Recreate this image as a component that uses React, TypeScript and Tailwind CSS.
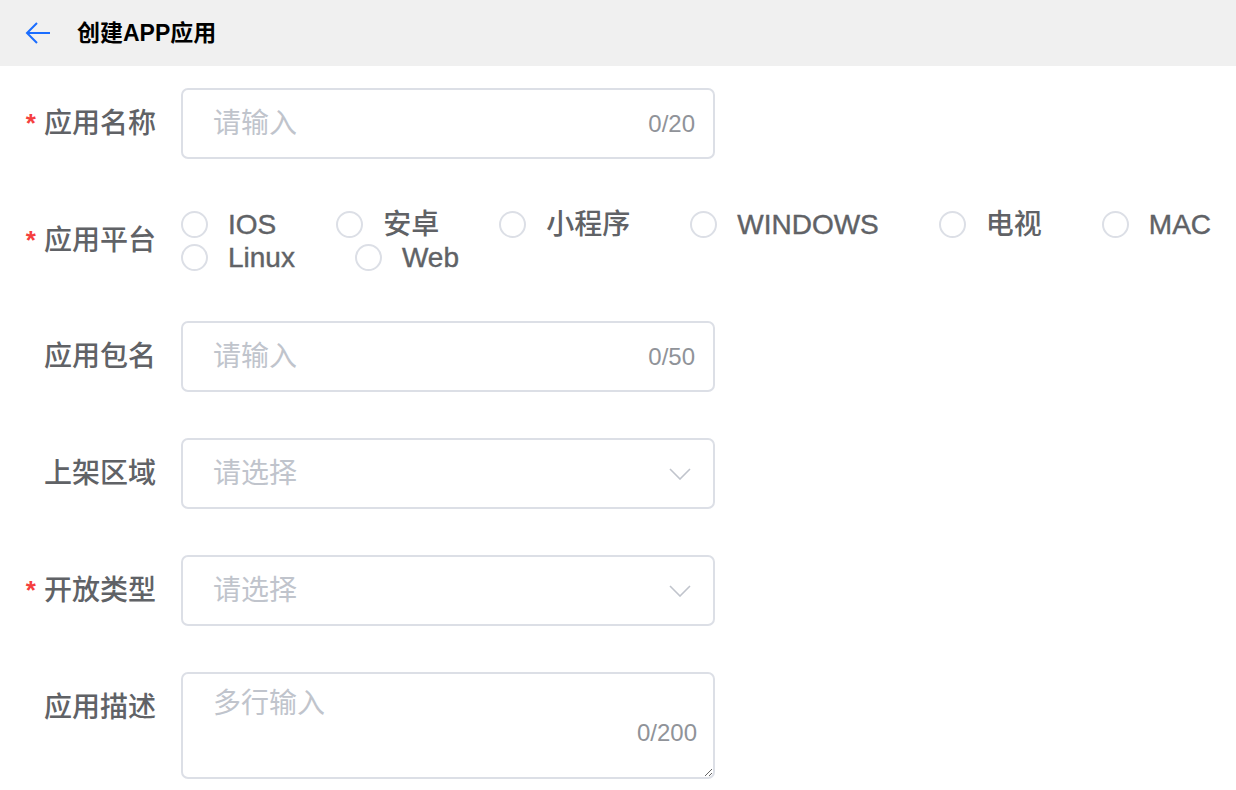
const font = "font-['Liberation_Sans','Noto_Sans_CJK_SC',sans-serif]";

type RowProps = {
  label: string;
  required?: boolean;
  top?: boolean;
  children: React.ReactNode;
};

function Star() {
  return <span className="text-[#f53f3f] text-[26px] font-bold mr-[8px] mt-[-2px] leading-none">*</span>;
}

function FormRow({ label, required, top, children }: RowProps) {
  return (
    <div className={`flex ${top ? "items-start" : "items-center"} mb-[46px]`}>
      <div className="w-[181px] shrink-0 flex justify-end items-center pr-[25px] h-[71px]">
        {required ? <Star /> : null}
        <span className="text-[28px] font-medium text-[#606266] leading-none">{label}</span>
      </div>
      {children}
    </div>
  );
}

function TextInput({ max }: { max: number }) {
  return (
    <div className="w-[534px] h-[71px] border-2 border-[#dcdfe6] rounded-[7px] flex items-center pl-[30px] pr-[18px]">
      <span className="flex-1 text-[28px] text-[#c0c4cc]">请输入</span>
      <span className="text-[24px] text-[#909399]">0/{max}</span>
    </div>
  );
}

function SelectInput() {
  return (
    <div className="w-[534px] h-[71px] border-2 border-[#dcdfe6] rounded-[7px] flex items-center pl-[30px] pr-[22px]">
      <span className="flex-1 text-[28px] text-[#c0c4cc]">请选择</span>
      <svg width="22" height="12" viewBox="0 0 22 12" fill="none">
        <path d="M1 1l10 10L21 1" stroke="#c0c4cc" strokeWidth="1.6" />
      </svg>
    </div>
  );
}

function Radio({ label }: { label: string }) {
  // latin labels get a faint stroke so they read as medium weight
  const latin = /^[A-Za-z]+$/.test(label);
  return (
    <label className="flex items-center h-[33px]">
      <span className="w-[27px] h-[27px] rounded-full border-2 border-[#dcdfe6] mr-[20px]" />
      <span
        className={
          latin
            ? "text-[28px] text-[#606266] leading-none [-webkit-text-stroke:0.4px_#606266]"
            : "text-[28px] font-medium text-[#606266] leading-none"
        }
      >
        {label}
      </span>
    </label>
  );
}

const platforms = ["IOS", "安卓", "小程序", "WINDOWS", "电视", "MAC", "Linux", "Web"];

export default function App() {
  return (
    <div className={`${font} w-[1236px] h-[790px] bg-white overflow-hidden`}>
      <div className="h-[66px] bg-[#f0f0f0] flex items-center pl-[24px]">
        <svg width="28" height="24" viewBox="0 0 28 24" fill="none" className="mr-[25px]">
          <path d="M26 12H3M13 2L3 12l10 10" stroke="#1a6dff" strokeWidth="2" />
        </svg>
        <span className="text-[23px] font-bold text-black">创建APP应用</span>
      </div>

      <div className="pt-[22px]">
        <FormRow label="应用名称" required>
          <TextInput max={20} />
        </FormRow>

        <div className="flex items-center mb-[46px] h-[70px]">
          <div className="w-[181px] shrink-0 flex justify-end items-center pr-[25px] pt-[2px]">
            <Star />
            <span className="text-[28px] font-medium text-[#606266] leading-none">应用平台</span>
          </div>
          <div className="flex flex-wrap gap-x-[60px] w-[1055px] pt-[2px]">
            {platforms.map((p) => (
              <Radio key={p} label={p} />
            ))}
          </div>
        </div>

        <FormRow label="应用包名">
          <TextInput max={50} />
        </FormRow>

        <FormRow label="上架区域">
          <SelectInput />
        </FormRow>

        <FormRow label="开放类型" required>
          <SelectInput />
        </FormRow>

        <FormRow label="应用描述" top>
          <div className="relative w-[534px] h-[107px]">
            <textarea
              placeholder="多行输入"
              className="w-full h-full border-2 border-[#dcdfe6] rounded-[7px] pl-[30px] pt-[12px] text-[28px] leading-[36px] text-[#606266] placeholder:text-[#c0c4cc] outline-none"
            />
            <span className="absolute right-[18px] top-[43px] text-[24px] text-[#909399]">0/200</span>
          </div>
        </FormRow>
      </div>
    </div>
  );
}
